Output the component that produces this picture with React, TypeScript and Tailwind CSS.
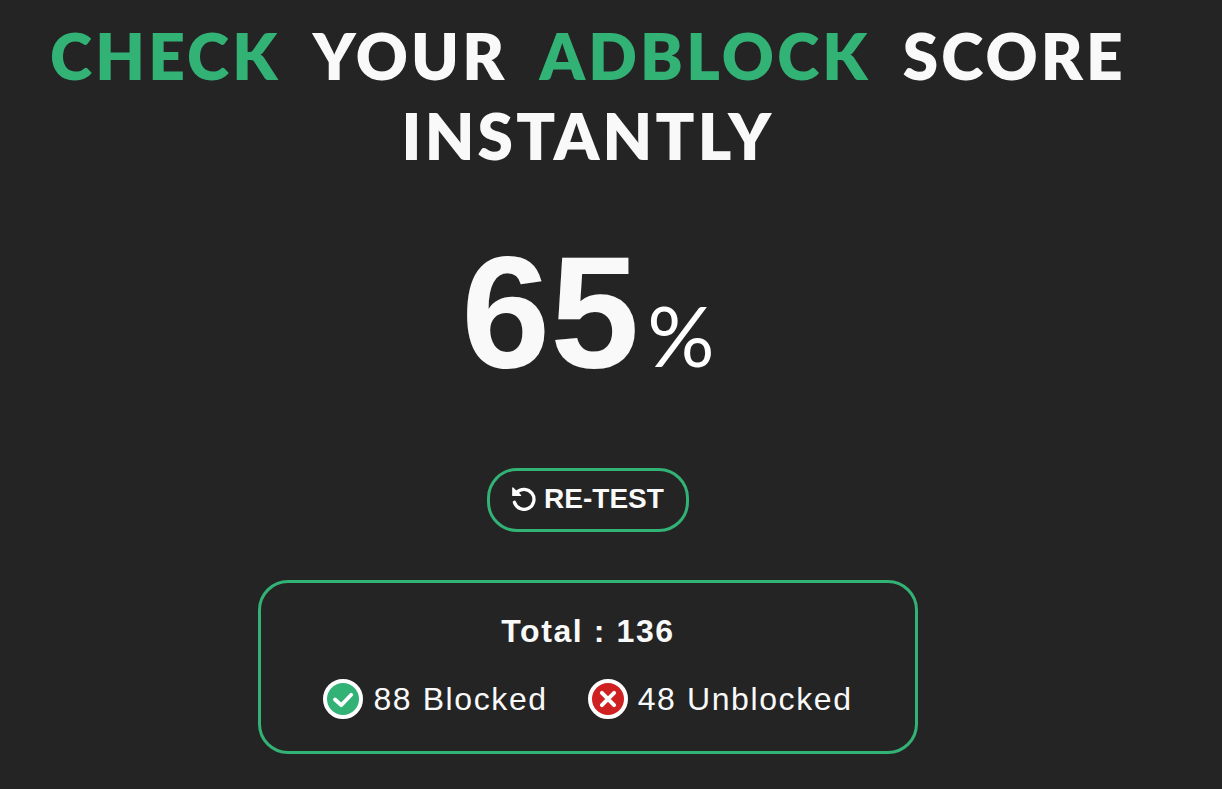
function CheckBadge() {
  return (
    <svg viewBox="0 0 40 40" className="size-10 shrink-0" aria-hidden="true">
      <circle cx="20" cy="20" r="18" fill="#33b276" stroke="#fff" strokeWidth="4" />
      <path d="M12 20.5l6.200 5.700 10-10.400" fill="none" stroke="#fff" strokeWidth="3.8" strokeLinecap="round" strokeLinejoin="round" />
    </svg>
  );
}

function CrossBadge() {
  return (
    <svg viewBox="0 0 40 40" className="size-10 shrink-0" aria-hidden="true">
      <circle cx="20" cy="20" r="18" fill="#cf2122" stroke="#fff" strokeWidth="4" />
      <path d="M13.900 13.900l12.200 12.200M26.100 13.900L13.900 26.100" fill="none" stroke="#fff" strokeWidth="4" strokeLinecap="round" />
    </svg>
  );
}

function RetestIcon() {
  return (
    <svg viewBox="0 0 24 24" className="size-6 shrink-0" aria-hidden="true">
      <path d="M4.600 5.600A10 10 0 1 1 2.400 15.300" fill="none" stroke="#fff" strokeWidth="3.3" strokeLinecap="round" />
      <path d="M.8.8V8.400H8.600L6.200 5.800 3.200 3.200Z" fill="#fff" stroke="#fff" strokeWidth="1.200" strokeLinejoin="round" />
    </svg>
  );
}

export default function App() {
  return (
    <main className="flex min-h-screen flex-col items-center bg-[#242424] pt-4 pr-[46px] pb-9 font-['Liberation_Sans',Arial,sans-serif] text-[#f9f9f9]">
      <h1 className="flex flex-wrap justify-center gap-x-8 font-['Lato',sans-serif] text-[64px] leading-20 font-extrabold tracking-wider">
        <span className="text-[#33b276]">CHECK</span> <span>YOUR</span>{" "}
        <span className="text-[#33b276]">ADBLOCK</span> <span>SCORE</span>{" "}
        <span>INSTANTLY</span>
      </h1>

      <p className="mt-12 flex items-baseline gap-2 text-[160px] leading-44 font-bold">
        65
        <span className="font-['Lato',sans-serif] text-[84px] leading-20 font-normal text-white">%</span>
      </p>

      <button type="button" className="mt-17 flex h-16 cursor-pointer items-center gap-2 rounded-[30px] border-3 border-[#33b276] px-[22px] pb-0.5 text-[28px] leading-8 font-bold">
        <RetestIcon />
        RE-TEST
      </button>

      <section className="mt-12 flex w-full max-w-[660px] flex-col items-center rounded-[30px] border-3 border-[#33b276] pt-7 pb-8">
        <h2 className="text-[32px] leading-10 font-bold tracking-wider">Total : 136</h2>
        <ul className="mt-7 flex flex-wrap justify-center gap-x-10 gap-y-4 text-[32px] leading-10 tracking-wider">
          <li className="flex items-center gap-2.5">
            <CheckBadge />
            88 Blocked
          </li>
          <li className="flex items-center gap-2.5">
            <CrossBadge />
            48 Unblocked
          </li>
        </ul>
      </section>
    </main>
  );
}
